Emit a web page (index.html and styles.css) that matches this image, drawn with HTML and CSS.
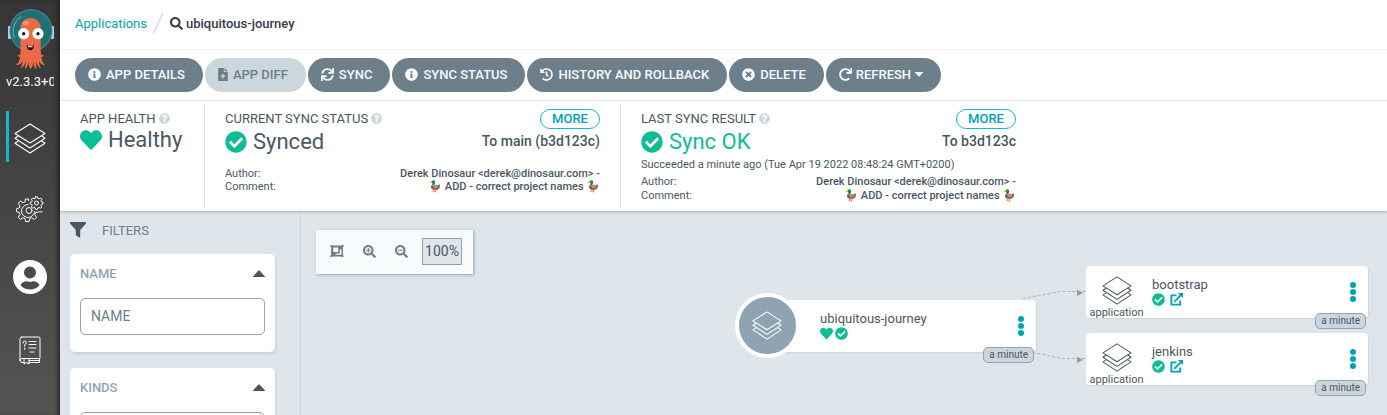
FILE: index.html
```
<!DOCTYPE html>
<html lang="en">
<head>
<meta charset="utf-8">
<title>ubiquitous-journey</title>
<link rel="stylesheet" href="styles.css">
</head>
<body>
<svg class="defs" aria-hidden="true">
  <symbol id="info" viewBox="0 0 512 512"><path d="M256 8C119.043 8 8 119.083 8 256c0 136.997 111.043 248 248 248s248-111.003 248-248C504 119.083 392.957 8 256 8zm0 110c23.196 0 42 18.804 42 42s-18.804 42-42 42-42-18.804-42-42 18.804-42 42-42zm56 254c0 6.627-5.373 12-12 12h-88c-6.627 0-12-5.373-12-12v-24c0-6.627 5.373-12 12-12h12v-64h-12c-6.627 0-12-5.373-12-12v-24c0-6.627 5.373-12 12-12h64c6.627 0 12 5.373 12 12v100h12c6.627 0 12 5.373 12 12v24z"/></symbol>
  <symbol id="check" viewBox="0 0 512 512"><path d="M504 256c0 136.967-111.033 248-248 248S8 392.967 8 256 119.033 8 256 8s248 111.033 248 248zM227.314 387.314l184-184c6.248-6.248 6.248-16.379 0-22.627l-22.627-22.627c-6.248-6.249-16.379-6.249-22.628 0L216 308.118l-70.059-70.059c-6.248-6.248-16.379-6.248-22.628 0l-22.627 22.627c-6.248 6.248-6.248 16.379 0 22.627l104 104c6.249 6.249 16.379 6.249 22.628.001z"/></symbol>
  <symbol id="heart" viewBox="0 0 512 512"><path d="M462.3 62.6C407.5 15.9 326 24.3 275.7 76.2L256 96.5l-19.7-20.3C186.1 24.3 104.5 15.9 49.7 62.6c-62.8 53.6-66.1 149.8-9.9 207.9l193.5 199.8c12.5 12.9 32.8 12.9 45.3 0l193.5-199.8c56.3-58.1 53-154.3-9.8-207.9z"/></symbol>
  <symbol id="question" viewBox="0 0 512 512"><path d="M504 256c0 136.997-111.043 248-248 248S8 392.997 8 256C8 119.083 119.043 8 256 8s248 111.083 248 248zM262.655 90c-54.497 0-89.255 22.957-116.549 63.758-3.536 5.286-2.353 12.415 2.715 16.258l34.699 26.31c5.205 3.947 12.621 3.008 16.665-2.122 17.864-22.658 30.113-35.797 57.303-35.797 20.429 0 45.698 13.148 45.698 32.958 0 14.976-12.363 22.667-32.534 33.976C247.128 238.528 216 254.941 216 296v4c0 6.627 5.373 12 12 12h56c6.627 0 12-5.373 12-12v-1.333c0-28.462 83.186-29.647 83.186-106.667 0-58.002-60.165-102-116.531-102zM256 338c-25.365 0-46 20.635-46 46 0 25.364 20.635 46 46 46s46-20.636 46-46c0-25.365-20.635-46-46-46z"/></symbol>
  <symbol id="times" viewBox="0 0 512 512"><path d="M256 8C119 8 8 119 8 256s111 248 248 248 248-111 248-248S393 8 256 8zm121.600 313.100c4.700 4.700 4.700 12.300 0 17L338 377.600c-4.700 4.700-12.300 4.700-17 0L256 312l-65.100 65.600c-4.700 4.700-12.300 4.700-17 0L134.400 338c-4.700-4.700-4.700-12.300 0-17l65.600-65-65.600-65.100c-4.700-4.700-4.700-12.300 0-17l39.600-39.600c4.700-4.700 12.300-4.700 17 0l65 65.700 65.100-65.600c4.700-4.700 12.300-4.700 17 0l39.600 39.600c4.700 4.700 4.700 12.300 0 17L312 256l65.600 65.100z"/></symbol>
  <symbol id="redo" viewBox="0 0 512 512"><path d="M500.330 0h-47.410a12 12 0 0 0-12 12.570l4 82.760A247.420 247.420 0 0 0 256 8C119.340 8 7.900 119.530 8 256.190 8.100 393.070 119.100 504 256 504a247.100 247.100 0 0 0 166.180-63.910 12 12 0 0 0 .48-17.430l-34-34a12 12 0 0 0-16.380-.55A176 176 0 1 1 402.100 157.800l-101.530-4.870a12 12 0 0 0-12.570 12v47.410a12 12 0 0 0 12 12h200.330a12 12 0 0 0 12-12V12a12 12 0 0 0-12-12z"/></symbol>
  <symbol id="history" viewBox="0 0 512 512"><path d="M504 255.531c.253 136.640-111.180 248.372-247.820 248.468-59.015.042-113.223-20.530-155.822-54.911-11.077-8.940-11.905-25.541-1.839-35.607l11.267-11.267c8.609-8.609 22.353-9.551 31.891-1.984C173.062 425.135 212.781 440 256 440c101.705 0 184-82.311 184-184 0-101.705-82.311-184-184-184-48.814 0-93.149 18.969-126.068 49.932l50.754 50.754c10.080 10.080 2.941 27.314-11.313 27.314H24c-8.837 0-16-7.163-16-16V38.627c0-14.254 17.234-21.393 27.314-11.314l49.372 49.372C129.209 34.136 189.552 8 256 8c136.810 0 247.747 110.780 248 247.531zm-180.912 78.784l9.823-12.630c8.138-10.463 6.253-25.542-4.210-33.679L288 256.349V152c0-13.255-10.745-24-24-24h-16c-13.255 0-24 10.745-24 24v135.651l65.409 50.874c10.463 8.137 25.541 6.253 33.679-4.210z"/></symbol>
  <symbol id="sync" viewBox="0 0 512 512"><path d="M440.650 12.570l4 82.770A247.160 247.160 0 0 0 255.830 8C134.730 8 33.910 94.920 12.290 209.820A12 12 0 0 0 24.090 224h49.050a12 12 0 0 0 11.670-9.260 175.910 175.910 0 0 1 317-56.940l-101.460-4.860a12 12 0 0 0-12.570 12v47.410a12 12 0 0 0 12 12H500a12 12 0 0 0 12-12V12a12 12 0 0 0-12-12h-47.370a12 12 0 0 0-11.980 12.570zM255.830 432a175.610 175.610 0 0 1-146-77.800l101.800 4.870a12 12 0 0 0 12.570-12v-47.400a12 12 0 0 0-12-12H12a12 12 0 0 0-12 12V500a12 12 0 0 0 12 12h47.350a12 12 0 0 0 12-12.600l-4.150-82.570A247.170 247.170 0 0 0 255.830 504c121.110 0 221.930-86.920 243.550-201.820a12 12 0 0 0-11.800-14.180h-49.050a12 12 0 0 0-11.670 9.260A175.860 175.860 0 0 1 255.830 432z"/></symbol>
  <symbol id="search" viewBox="0 0 512 512"><path d="M505 442.700L405.300 343c-4.500-4.500-10.600-7-17-7H372c27.600-35.300 44-79.700 44-128C416 93.100 322.900 0 208 0S0 93.100 0 208s93.100 208 208 208c48.300 0 92.700-16.400 128-44v16.300c0 6.400 2.500 12.500 7 17l99.700 99.700c9.400 9.400 24.600 9.400 33.900 0l28.300-28.300c9.400-9.400 9.400-24.600.1-34zM208 336c-70.700 0-128-57.200-128-128 0-70.700 57.200-128 128-128 70.700 0 128 57.200 128 128 0 70.700-57.200 128-128 128z"/></symbol>
  <symbol id="zoom-in" viewBox="0 0 512 512"><use href="#search"/><path d="M186 120h44v66h66v44h-66v66h-44v-66h-66v-44h66z"/></symbol>
  <symbol id="zoom-out" viewBox="0 0 512 512"><use href="#search"/><path d="M120 186h176v44H120z"/></symbol>
  <symbol id="diff" viewBox="0 0 384 512"><path fill-rule="evenodd" d="M24 0h200v136c0 13 11 24 24 24h136v328c0 13-11 24-24 24H24c-13 0-24-11-24-24V24C0 11 11 0 24 0zM160 230v66H94v48h66v66h56v-66h66v-48h-66v-66zM256 0l128 128H256z"/></symbol>
  <symbol id="filter" viewBox="0 0 16 16"><path d="M0 0h16v1.500L10.200 8v8L5.800 13.300V8L0 1.500z"/></symbol>
  <symbol id="fit" viewBox="0 0 14 12"><path fill-rule="evenodd" d="M.5 0h2v.6h9V0h2v2h-.6v8h.6v2h-2v-.6h-9v.6h-2v-2h.6V2H.500zM3.200 2.500V7h5V2.500zM9.700 4.500v4H5.500v1.300h6V4.500z"/></symbol>
  <symbol id="external" viewBox="0 0 14 14"><path d="M7 2.500H1.500v10H11V8M4.500 9.500L12 2" fill="none" stroke="currentColor" stroke-width="2"/><path d="M8.500 0H14v5.500z"/></symbol>
  <symbol id="layers" viewBox="0 0 32 31"><path d="M16 1l15 9.500L16 20 1 10.500zM4.500 12.800L1 15.200 16 25l15-9.800-3.500-2.400M4.500 17.800L1 20.200 16 30l15-9.800-3.500-2.400" fill="none" stroke="currentColor" stroke-linejoin="round" stroke-width="1.100"/></symbol>
  <symbol id="dots" viewBox="0 0 6 20"><circle cx="3" cy="3" r="3"/><circle cx="3" cy="10" r="3"/><circle cx="3" cy="17" r="3"/></symbol>
  <symbol id="caret-up" viewBox="0 0 12 7"><path d="M0 7v-.6L5.500.4h1L12 6.400V7z"/></symbol>
  <symbol id="caret-down" viewBox="0 0 8 5"><path d="M0 0h8v.6L4.400 4.500h-.8L0 .6z"/></symbol>
</svg>

<div class="app">
  <nav class="rail">
    <svg class="rail-logo" viewBox="0 0 48 62" role="img" aria-label="Argo">
      <rect x="2" y="18" width="3" height="13" rx="1" fill="#b5cfdf"/><rect x="45" y="18" width="3" height="13" rx="1" fill="#b5cfdf"/>
      <circle cx="25" cy="22.500" r="21.500" fill="#427c91"/><circle cx="25" cy="22.500" r="20" fill="#1f7071"/>
      <path d="M8.500 30C5.500 22 8 13 15 9" fill="none" stroke="#5fa5a3" stroke-width="1.200" stroke-linecap="round"/>
      <path d="M14.500 20C14.500 6.500 34.700 6.500 34.700 20V44c.3 3 1.500 3 3 3.500-1 1-1.500 1.500-2.400 1.500.7 3 1 6 4 8-3 .3-5-1-6.300-4 .2 3 .5 5 2 7-3-.5-4.500-3-5.200-7 0 3 .4 5 .8 8-2.500-1-3.200-4-3.300-7.500-.3 3-.8 5-2.500 7.500-1.700-2-2.300-4-2.500-7.500-.3 3.500-1 6-3.300 7.500.5-2.500.8-5 .6-8-.7 4-2 6.500-5 7 1.500-2 2-4 2-7-1.500 3-3.300 4.300-6.600 4 3-2 3.500-5 4.200-8-1 0-1.700-.5-2.400-1.500 1.500-.5 2.700-.5 2.700-3.500z" fill="#ec6b47"/>
      <ellipse cx="20" cy="15" rx="3" ry="2" fill="#f79a7c"/>
      <circle cx="17.700" cy="25.700" r="5.600" fill="#fff"/><circle cx="32" cy="25.700" r="5.600" fill="#fff"/>
      <circle cx="17.700" cy="25.700" r="1.700" fill="#181818"/><circle cx="32" cy="25.700" r="1.700" fill="#181818"/>
      <path d="M20.500 37q4 2 7.600 0-.5 5.300-3.800 5.300T20.500 37z" fill="#231414"/><path d="M21.800 37.700q2.500 1 5 0l-.6 1.500h-3.800z" fill="#fff"/>
    </svg>
    <span class="rail-version">v2.3.3+0a1</span>
    <a class="rail-link rail-active" href="#apps" aria-label="Applications"><svg class="ic-layers-lg"><use href="#layers"/></svg></a>
    <a class="rail-link rail-wide" href="#settings" aria-label="Settings">
      <svg class="line ic-gear" viewBox="0 0 28 29">
        <path d="M12.500 4.500v-1.500h-3l-.6 3-2 .8L4.500 5 2.300 7.300 4 10l-.8 2-2.700.7v3l2.700.7L4 18.500l-1.700 2.700 2.200 2.200L7 21.700l2 .9.600 3h3.400l.6-3 2-.9 2.700 1.800 2.200-2.200-1.700-2.700.8-2 3-.7H26M12 8.500a6.500 6.500 0 1 0 6.500 7"/>
        <circle cx="13" cy="14.500" r="3"/><circle cx="20.500" cy="7" r="2"/>
        <path d="M19.600.8h1.800l.4 1.500 1.300.5 1.400-.8 1.300 1.300-.8 1.400.5 1.200 1.500.4v1.600l-1.500.4-.5 1.300.8 1.300-1.300 1.400-1.400-.9-1.200.6-.5 1.500h-1.700l-.4-1.500-1.300-.6-1.300.9-1.300-1.400.8-1.300-.5-1.300-1.500-.4V6.300l1.500-.4.5-1.200-.8-1.400L16.700 2l1.300.8 1.200-.5z"/>
      </svg></a>
    <a class="rail-link rail-tight" href="#user" aria-label="User info">
      <svg class="ic-user" viewBox="0 0 34 34"><path fill-rule="evenodd" d="M17 0a17 17 0 1 1 0 34 17 17 0 0 1 0-34zM17 6.500a6 6 0 1 0 0 12 6 6 0 0 0 0-12zM7.500 25.200Q11.500 29.500 17 29.500T26.500 25.200C25 21.500 21 21 20 21.200q-3 1-6 0c-1-.2-5 .3-6.500 4z"/></svg></a>
    <a class="rail-link rail-wide" href="#docs" aria-label="Documentation">
      <svg class="line ic-book" viewBox="0 0 22 29"><path d="M3 1h16.500q1.500 0 1.500 1.500v20H3Q1 22.500 1 24.500V3Q1 1 3 1zM1 24.500q0 2 2 2h2M10 26.500h10.500M20.500 22.500v4M10 24.500h10M5 23v5l2.500-1.500L10 28v-5M10 5.500h7M10 8.500h7M10 12h7M11 16h4"/><path d="M4 7q0-2 1.700-2T7.300 7Q7.300 8 5.700 8.700v1.500M5.700 12v1.400"/></svg></a>
  </nav>

  <div class="page">
    <header class="crumbs">
      <a class="crumb-link" href="#applications">Applications</a>
      <svg class="crumb-sep" viewBox="0 0 12 23"><path d="M1 22L11 1" stroke="#ccd6dd" stroke-width="1.200"/></svg>
      <h1 class="crumb-title"><svg class="ic-13"><use href="#search"/></svg>ubiquitous-journey</h1>
    </header>

    <div class="actions">
      <button class="btn"><svg class="ic-13"><use href="#info"/></svg>APP DETAILS</button>
      <button class="btn btn-off" disabled><svg class="ic-diff"><use href="#diff"/></svg>APP DIFF</button>
      <button class="btn"><svg class="ic-13"><use href="#sync"/></svg>SYNC</button>
      <button class="btn"><svg class="ic-13"><use href="#info"/></svg>SYNC STATUS</button>
      <button class="btn"><svg class="ic-13"><use href="#history"/></svg>HISTORY AND ROLLBACK</button>
      <button class="btn"><svg class="ic-13"><use href="#times"/></svg>DELETE</button>
      <button class="btn btn-menu"><svg class="ic-13"><use href="#redo"/></svg>REFRESH<svg class="ic-caret"><use href="#caret-down"/></svg></button>
    </div>

    <section class="status">
      <div class="stat">
        <div class="stat-head"><span class="stat-label">APP HEALTH<svg class="ic-help"><use href="#question"/></svg></span></div>
        <div class="stat-value stat-health"><svg class="ic-22 green"><use href="#heart"/></svg>Healthy</div>
      </div>
      <div class="stat stat-wide">
        <div class="stat-head"><span class="stat-label">CURRENT SYNC STATUS<svg class="ic-help"><use href="#question"/></svg></span><button class="more">MORE</button></div>
        <div class="stat-row"><div class="stat-value"><svg class="ic-22 green"><use href="#check"/></svg>Synced</div><span class="rev">To main (b3d123c)</span></div>
        <dl class="meta meta-first"><dt>Author:</dt><dd>Derek Dinosaur &lt;derek@dinosaur.com&gt; -</dd><dt>Comment:</dt><dd>🦆 ADD - correct project names 🦆</dd></dl>
      </div>
      <div class="stat stat-wide">
        <div class="stat-head"><span class="stat-label">LAST SYNC RESULT<svg class="ic-help"><use href="#question"/></svg></span><button class="more">MORE</button></div>
        <div class="stat-row"><div class="stat-value green"><svg class="ic-22"><use href="#check"/></svg>Sync OK</div><span class="rev">To b3d123c</span></div>
        <p class="when">Succeeded a minute ago (Tue Apr 19 2022 08:48:24 GMT+0200)</p>
        <dl class="meta meta-loose"><dt>Author:</dt><dd>Derek Dinosaur &lt;derek@dinosaur.com&gt; -</dd><dt>Comment:</dt><dd>🦆 ADD - correct project names 🦆</dd></dl>
      </div>
    </section>

    <div class="body">
      <aside class="filters">
        <h2 class="filters-title"><svg class="ic-filter"><use href="#filter"/></svg>FILTERS</h2>
        <div class="card">
          <label class="card-head" for="f-name">NAME<svg class="ic-up"><use href="#caret-up"/></svg></label>
          <input class="field" id="f-name" type="text" placeholder="NAME">
        </div>
        <div class="card">
          <label class="card-head" for="f-kinds">KINDS<svg class="ic-up"><use href="#caret-up"/></svg></label>
          <input class="field" id="f-kinds" type="text" placeholder="KINDS">
        </div>
      </aside>

      <main class="canvas">
        <div class="tools">
          <button class="tool" aria-label="Fit"><svg class="ic-fit"><use href="#fit"/></svg></button>
          <button class="tool" aria-label="Zoom in"><svg class="ic-13"><use href="#zoom-in"/></svg></button>
          <button class="tool" aria-label="Zoom out"><svg class="ic-13"><use href="#zoom-out"/></svg></button>
          <span class="pct">100%</span>
        </div>
        <svg class="edges" viewBox="0 0 64 72">
          <path d="M1 7.500L39 .5H64M1 59L39 67.500H64" fill="none" stroke="#a3b2be" stroke-dasharray="3 2"/>
          <path d="M55 -1.500l6 3.500-6 3zM55 65.500l6 3.500-6 3z" fill="#999"/>
        </svg>
        <article class="node node-root">
          <span class="disc"><svg class="ic-layers"><use href="#layers"/></svg></span>
          <div class="node-text"><span class="node-name">ubiquitous-journey</span><span class="node-icons"><svg class="ic-13 green"><use href="#heart"/></svg><svg class="ic-13 green"><use href="#check"/></svg></span></div>
          <button class="kebab" aria-label="Actions"><svg class="ic-dots"><use href="#dots"/></svg></button>
          <span class="age">a minute</span>
        </article>
        <article class="node node-a">
          <span class="kind"><svg class="ic-layers"><use href="#layers"/></svg>application</span>
          <div class="node-text"><span class="node-name">bootstrap</span><span class="node-icons node-links"><svg class="ic-13 green"><use href="#check"/></svg><a class="ext" href="#bootstrap" aria-label="Open bootstrap"><svg class="ic-13"><use href="#external"/></svg></a></span></div>
          <button class="kebab" aria-label="Actions"><svg class="ic-dots"><use href="#dots"/></svg></button>
          <span class="age">a minute</span>
        </article>
        <article class="node node-b">
          <span class="kind"><svg class="ic-layers"><use href="#layers"/></svg>application</span>
          <div class="node-text"><span class="node-name">jenkins</span><span class="node-icons node-links"><svg class="ic-13 green"><use href="#check"/></svg><a class="ext" href="#jenkins" aria-label="Open jenkins"><svg class="ic-13"><use href="#external"/></svg></a></span></div>
          <button class="kebab" aria-label="Actions"><svg class="ic-dots"><use href="#dots"/></svg></button>
          <span class="age">a minute</span>
        </article>
      </main>
    </div>
  </div>
</div>
</body>
</html>
```
FILE: styles.css
```
* { box-sizing: border-box; }
body { margin: 0; font-family: Roboto, "Noto Color Emoji", sans-serif; font-size: 13px; color: #495763; background: #dee6eb; }
button, input { font-family: inherit; }
button { cursor: pointer; }
svg { display: block; flex: none; fill: currentColor; }
h1, h2, p, dl, dd { margin: 0; }
.defs { position: absolute; width: 0; height: 0; }
.line { fill: none; stroke: currentColor; stroke-width: 1; stroke-linejoin: round; stroke-linecap: round; }
.green { color: #0dbd94; }

.app { display: flex; height: 100vh; overflow: hidden; }
.rail { width: 60px; flex: none; display: flex; flex-direction: column; align-items: center; padding-top: 8px; background: linear-gradient(#363636, #545454); box-shadow: inset -4px 0 4px -2px #222; color: #fff; }
.rail-logo { width: 48px; height: 62px; }
.rail-version { width: 48px; margin-top: 4px; line-height: 16px; overflow: hidden; white-space: nowrap; }
.rail-link { width: 48px; height: 51px; margin-top: 20px; display: flex; align-items: center; justify-content: center; color: #fff; }
.rail-active { margin-top: 21px; padding: 3px 3px 0 0; border-left: 3px solid #17b8c6; }
.rail-wide { margin-top: 23px; }
.rail-tight { margin-top: 15px; }
.ic-layers-lg { width: 32px; height: 31px; }
.ic-gear { width: 28px; height: 29px; }
.ic-user { width: 34px; height: 34px; }
.ic-book { width: 22px; height: 29px; }

.page { flex: 1; min-width: 0; display: flex; flex-direction: column; }
.crumbs { flex: none; height: 50px; padding: 0 15px 2px; display: flex; align-items: center; background: #fff; border-bottom: 1px solid #ebeff2; }
.crumb-link { color: #00a2b3; text-decoration: none; }
.crumb-sep { width: 12px; height: 23px; margin: 0 6px 0 5px; }
.crumb-title { display: flex; align-items: center; gap: 3px; font-size: 13px; font-weight: 500; color: #363c4a; }
.ic-13 { width: 13px; height: 13px; }
.ic-diff { width: 10px; height: 13px; }
.ic-caret { width: 8px; height: 5px; }

.actions { flex: none; height: 51px; padding: 0 15px; display: flex; align-items: center; gap: 2px; background: #fff; border-bottom: 1px solid #ebeff2; }
.btn { height: 34px; padding: 0 18px 2px 13px; display: flex; align-items: center; gap: 5px; border: 0; border-radius: 17px; background: #6d7f8b; color: #f8fbfb; font-size: 13px; font-weight: 500; white-space: nowrap; }
.btn-off { background: #ccd6dd; color: #6d7f8b; }
.btn-menu { gap: 4px; }

.status { flex: none; min-height: 110px; padding: 3px 0 2px; display: flex; background: #fff; box-shadow: 0 1px 3px rgba(0, 0, 0, .25); position: relative; z-index: 1; }
.stat { padding: 5px 20px 0; border-left: 1px solid #dee6eb; }
.stat:first-child { min-width: 144px; border-left: 0; }
.stat-wide { width: 416px; }
.stat-head { height: 20px; display: flex; align-items: center; justify-content: space-between; }
.stat-label { padding-bottom: 2px; display: flex; align-items: center; gap: 3px; white-space: nowrap; }
.ic-help { width: 11px; height: 11px; color: #ccd6dd; }
.more { width: 60px; height: 20px; padding: 0 0 1px; border: 1px solid #17b8c6; border-radius: 10px; background: #fff; color: #00a2b3; font-size: 13px; font-weight: 500; }
.stat-row { display: flex; align-items: center; justify-content: space-between; }
.stat-value { display: flex; align-items: center; gap: 6px; font-size: 22px; line-height: 26px; white-space: nowrap; }
.stat-health { line-height: 22px; }
.ic-22 { width: 22px; height: 22px; }
.rev { padding-bottom: 2px; font-size: 14px; font-weight: 500; }
.meta { display: grid; grid-template-columns: auto 1fr; font-size: 11px; line-height: 13px; }
.meta dd { text-align: right; font-weight: 500; white-space: nowrap; }
.meta-first { margin-top: 12px; }
.meta-loose { line-height: 14px; margin-top: 3px; }
.when { font-size: 11px; line-height: 14px; margin-top: 3px; white-space: nowrap; }

.body { flex: 1; min-height: 0; display: flex; }
.filters { width: 241px; flex: none; padding: 10px 25px 0 10px; border-right: 1px solid #ccd6dd; overflow: hidden; }
.filters-title { height: 18px; display: flex; align-items: center; gap: 16px; font-size: 13px; font-weight: 400; color: #6d7f8b; }
.ic-filter { width: 16px; height: 16px; color: #495763; }
.card { height: 98px; margin-top: 15px; padding: 9px 10px; border-radius: 5px; background: #fff; box-shadow: 1px 2px 3px rgba(0, 0, 0, .1); }
.card + .card { margin-top: 16px; }
.card-head { height: 20px; display: flex; align-items: center; justify-content: space-between; font-weight: 500; color: #8fa4b1; }
.ic-up { width: 12px; height: 7px; color: #495763; }
.field { display: block; width: 100%; height: 37px; margin-top: 15px; padding: 0 10px 2px; border: 1px solid #8fa4b1; border-radius: 5px; background: #fff; font-size: 14px; color: #495763; outline: 0; }
.field::placeholder { color: #6d7f8b; opacity: 1; }

.canvas { flex: 1; min-width: 0; position: relative; overflow: hidden; }
.tools { position: absolute; left: 15px; top: 19px; height: 44px; padding: 0 11px 2px 5px; display: flex; align-items: center; background: #f8fbfb; box-shadow: 1px 1px 3px #8fa4b1; }
.tool { width: 32px; height: 32px; padding: 0; display: flex; align-items: center; justify-content: center; border: 0; background: none; color: #6d7f8b; }
.ic-fit { width: 14px; height: 12px; }
.pct { width: 40px; height: 27px; margin-left: 5px; display: flex; align-items: center; justify-content: center; border: 1px solid #8fa4b1; background: #dee6eb; font-size: 14px; }

.edges { position: absolute; left: 721px; top: 80px; width: 64px; height: 72px; overflow: visible; }
.node { position: absolute; width: 282px; height: 52px; display: flex; background: #fff; border-radius: 4px; box-shadow: 1px 1px 1px #ccd6dd; }
.node-root { left: 453px; top: 89px; }
.node-a { left: 785px; top: 55px; }
.node-b { left: 785px; top: 122px; }
.disc { position: absolute; left: -19px; top: -7px; width: 65px; height: 65px; padding-right: 2px; display: flex; align-items: center; justify-content: center; border: 4px solid #fff; border-radius: 50%; background: #8fa4b1; color: #fff; }
.ic-layers { width: 30px; height: 29px; }
.kind { width: 61px; padding-top: 10px; display: flex; flex-direction: column; align-items: center; font-size: 11px; line-height: 15px; }
.node-text { padding: 11px 0 0 5px; display: flex; flex-direction: column; }
.node-root .node-text { padding-left: 66px; }
.node-name { line-height: 16px; }
.node-icons { display: flex; gap: 2px; }
.node-links { gap: 5px; }
.ext { color: #00a2b3; }
.kebab { margin-left: auto; padding: 0 12px 0 10px; display: flex; align-items: center; border: 0; background: none; color: #00a2b3; }
.ic-dots { width: 6px; height: 20px; }
.age { position: absolute; right: 2px; bottom: -11px; height: 16px; padding: 0 5px; line-height: 14px; font-size: 10px; border: 1px solid #8fa4b1; border-radius: 5px; background: #ccd6dd; }
```
